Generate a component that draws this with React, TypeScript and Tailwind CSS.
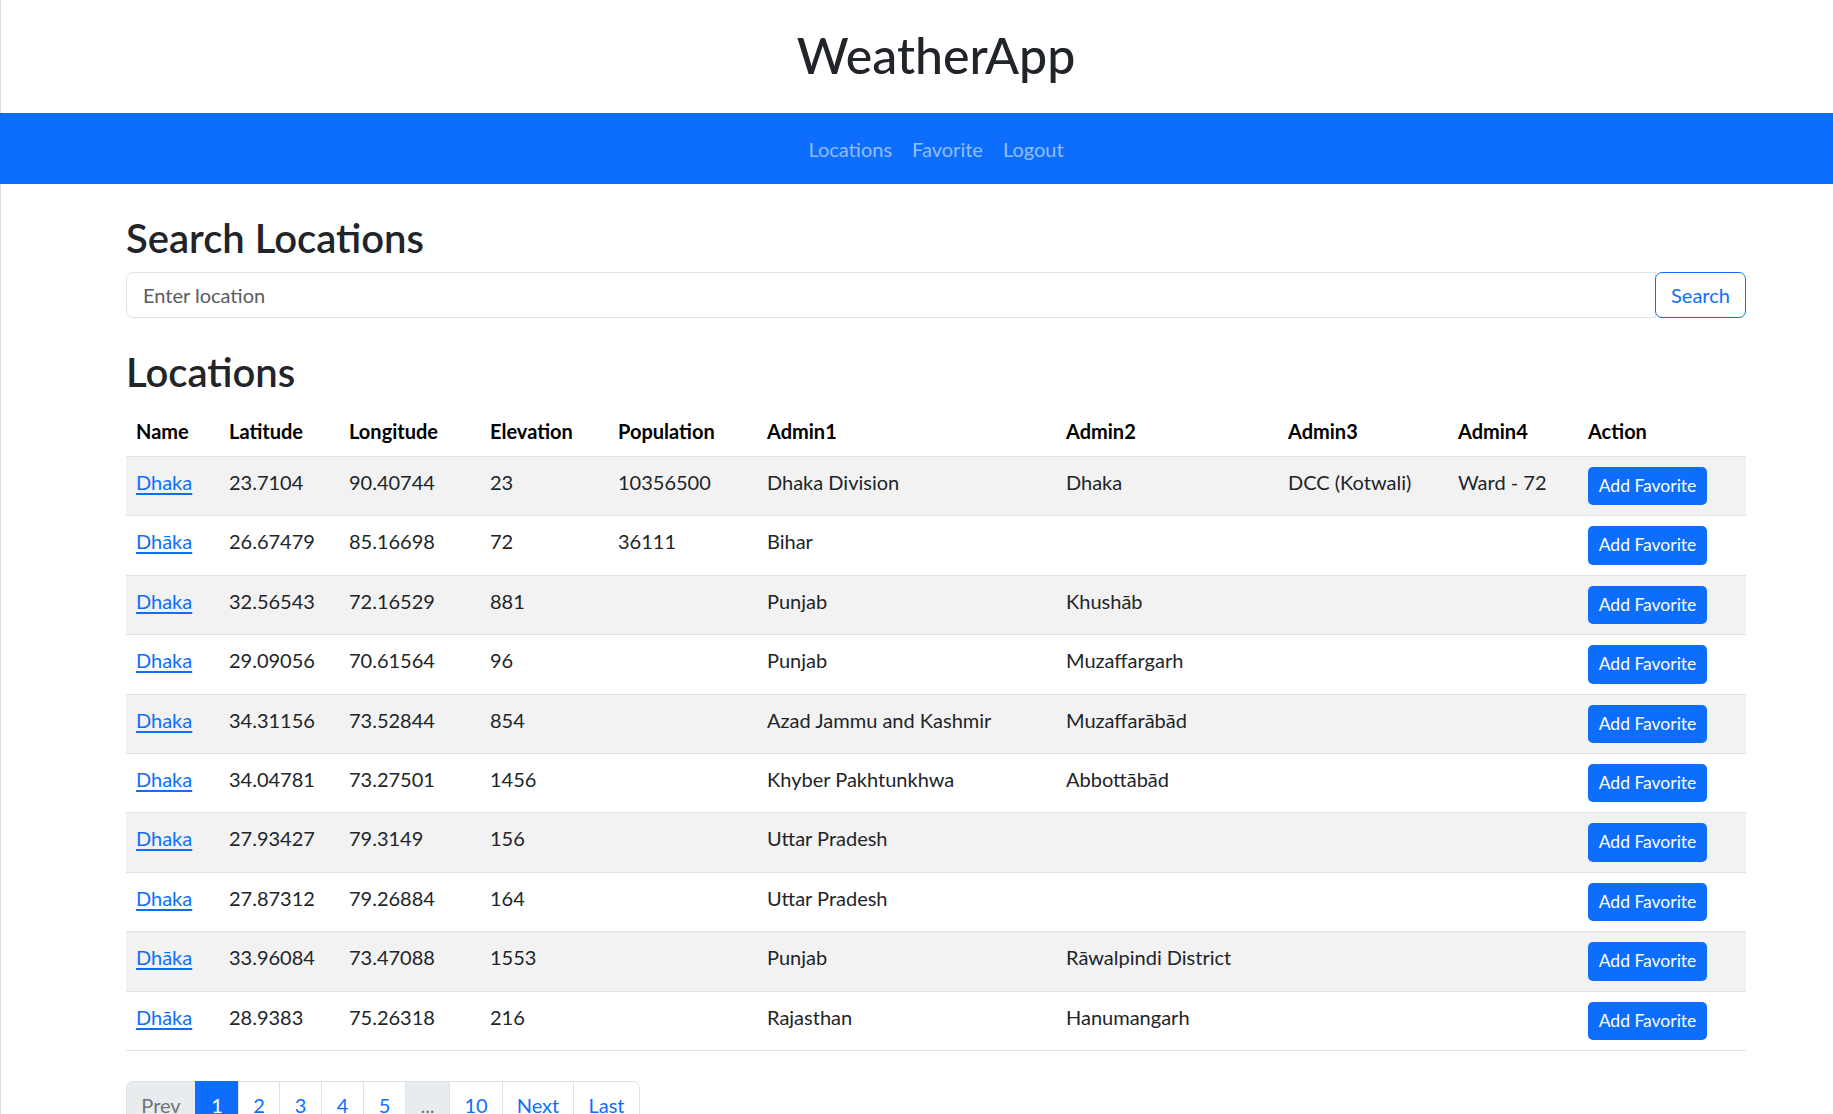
import React from "react";

type Row = {
  name: string;
  lat: string;
  lon: string;
  elev: string;
  pop: string;
  a1: string;
  a2: string;
  a3: string;
  a4: string;
};

const rows: Row[] = [
  { name: "Dhaka", lat: "23.7104", lon: "90.40744", elev: "23", pop: "10356500", a1: "Dhaka Division", a2: "Dhaka", a3: "DCC (Kotwali)", a4: "Ward - 72" },
  { name: "Dhāka", lat: "26.67479", lon: "85.16698", elev: "72", pop: "36111", a1: "Bihar", a2: "", a3: "", a4: "" },
  { name: "Dhaka", lat: "32.56543", lon: "72.16529", elev: "881", pop: "", a1: "Punjab", a2: "Khushāb", a3: "", a4: "" },
  { name: "Dhaka", lat: "29.09056", lon: "70.61564", elev: "96", pop: "", a1: "Punjab", a2: "Muzaffargarh", a3: "", a4: "" },
  { name: "Dhaka", lat: "34.31156", lon: "73.52844", elev: "854", pop: "", a1: "Azad Jammu and Kashmir", a2: "Muzaffarābād", a3: "", a4: "" },
  { name: "Dhaka", lat: "34.04781", lon: "73.27501", elev: "1456", pop: "", a1: "Khyber Pakhtunkhwa", a2: "Abbottābād", a3: "", a4: "" },
  { name: "Dhaka", lat: "27.93427", lon: "79.3149", elev: "156", pop: "", a1: "Uttar Pradesh", a2: "", a3: "", a4: "" },
  { name: "Dhaka", lat: "27.87312", lon: "79.26884", elev: "164", pop: "", a1: "Uttar Pradesh", a2: "", a3: "", a4: "" },
  { name: "Dhāka", lat: "33.96084", lon: "73.47088", elev: "1553", pop: "", a1: "Punjab", a2: "Rāwalpindi District", a3: "", a4: "" },
  { name: "Dhāka", lat: "28.9383", lon: "75.26318", elev: "216", pop: "", a1: "Rajasthan", a2: "Hanumangarh", a3: "", a4: "" },
];

const headers = [
  { label: "Name", w: "w-[93px]" },
  { label: "Latitude", w: "w-[120px]" },
  { label: "Longitude", w: "w-[141px]" },
  { label: "Elevation", w: "w-[128px]" },
  { label: "Population", w: "w-[149px]" },
  { label: "Admin1", w: "w-[299px]" },
  { label: "Admin2", w: "w-[222px]" },
  { label: "Admin3", w: "w-[170px]" },
  { label: "Admin4", w: "w-[130px]" },
  { label: "Action", w: "w-[168px]" },
];

export default function App() {
  return (
    <div className="min-h-[1114px] bg-white border-l border-[#dcdcdc] font-[Lato,'Open_Sans',sans-serif] text-[20px] text-[#212529]">
      {/* Header */}
      <header className="h-[113px] pt-[25px] pl-[38px]">
        <h1 className="text-center text-[50px] leading-[60px] font-medium text-[#212529]">WeatherApp</h1>
      </header>

      {/* Navbar */}
      <nav className="-ml-px pl-[39px] h-[71px] bg-[#0d6efd] flex items-center justify-center">
        <div className="flex items-center">
          <a className="px-[10px] leading-[30px] text-[#92befe]">Locations</a>
          <a className="px-[10px] leading-[30px] text-[#92befe]">Favorite</a>
          <a className="px-[10px] leading-[30px] text-[#92befe]">Logout</a>
        </div>
      </nav>

      {/* Main */}
      <main className="w-[1620px] ml-[125px] pt-[30px]">
        <h2 className="text-[40px] leading-[48px] font-semibold mb-[10px] text-[#212529]">Search Locations</h2>
        <div className="flex h-[46px]">
          <div className="flex-1 flex items-center border border-[#dee2e6] rounded-l-[7px] px-[16px] text-[#595c5f]">
            Enter location
          </div>
          <button className="w-[91px] h-[46px] -ml-px border border-[#0d6efd] rounded-[7px] text-[#0d6efd] bg-white flex items-center justify-center">
            Search
          </button>
        </div>

        <h2 className="mt-[30px] text-[40px] leading-[48px] font-semibold mb-[10px] text-[#212529]">Locations</h2>

        <table className="w-full table-fixed border-collapse">
          <thead>
            <tr className="border-b border-[#dee2e6]">
              {headers.map((h) => (
                <th key={h.label} className={`${h.w} text-left font-bold text-black px-[10px] py-[10px] leading-[30px] align-top`}>
                  {h.label}
                </th>
              ))}
            </tr>
          </thead>
          <tbody>
            {rows.map((r, i) => (
              <tr key={i} className={`border-b border-[#dee2e6] ${i % 2 === 0 ? "bg-[#f2f2f2]" : "bg-white"}`}>
                <td className="px-[10px] py-[10px] align-top leading-[30px]">
                  <a className="text-[#0d6efd] underline underline-offset-[3px]">{r.name}</a>
                </td>
                <td className="px-[10px] py-[10px] align-top leading-[30px]">{r.lat}</td>
                <td className="px-[10px] py-[10px] align-top leading-[30px]">{r.lon}</td>
                <td className="px-[10px] py-[10px] align-top leading-[30px]">{r.elev}</td>
                <td className="px-[10px] py-[10px] align-top leading-[30px]">{r.pop}</td>
                <td className="px-[10px] py-[10px] align-top leading-[30px]">{r.a1}</td>
                <td className="px-[10px] py-[10px] align-top leading-[30px]">{r.a2}</td>
                <td className="px-[10px] py-[10px] align-top leading-[30px]">{r.a3}</td>
                <td className="px-[10px] py-[10px] align-top leading-[30px]">{r.a4}</td>
                <td className="px-[10px] py-[10px] align-top">
                  <button className="w-[119px] h-[38.4px] rounded-[5px] bg-[#0d6efd] text-white text-[17.5px] flex items-center justify-center">
                    Add Favorite
                  </button>
                </td>
              </tr>
            ))}
          </tbody>
        </table>

        {/* Pagination */}
        <div className="mt-[30px] flex h-[48px]">
          <span className="w-[70px] flex items-center justify-center border border-[#dee2e6] rounded-l-[7px] bg-[#e9ecef] text-[#6c757d]">Prev</span>
          <span className="w-[44px] -ml-px flex items-center justify-center border border-[#0d6efd] bg-[#0d6efd] text-white">1</span>
          <span className="w-[42px] -ml-px flex items-center justify-center border border-[#dee2e6] text-[#0d6efd]">2</span>
          <span className="w-[43px] -ml-px flex items-center justify-center border border-[#dee2e6] text-[#0d6efd]">3</span>
          <span className="w-[43px] -ml-px flex items-center justify-center border border-[#dee2e6] text-[#0d6efd]">4</span>
          <span className="w-[43px] -ml-px flex items-center justify-center border border-[#dee2e6] text-[#0d6efd]">5</span>
          <span className="w-[45px] -ml-px flex items-center justify-center border border-[#dee2e6] bg-[#e9ecef] text-[#6c757d]">...</span>
          <span className="w-[54px] -ml-px flex items-center justify-center border border-[#dee2e6] text-[#0d6efd]">10</span>
          <span className="w-[72px] -ml-px flex items-center justify-center border border-[#dee2e6] text-[#0d6efd]">Next</span>
          <span className="w-[67px] -ml-px flex items-center justify-center border border-[#dee2e6] rounded-r-[7px] text-[#0d6efd]">Last</span>
        </div>
      </main>
    </div>
  );
}
